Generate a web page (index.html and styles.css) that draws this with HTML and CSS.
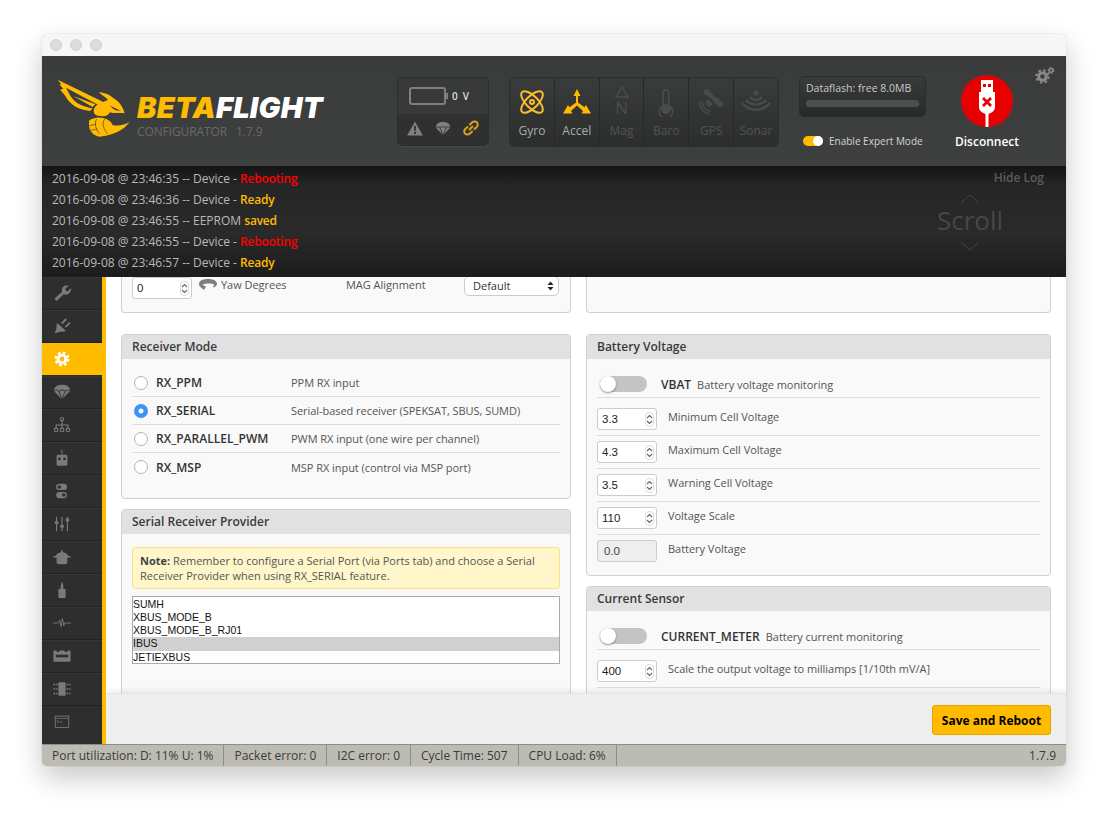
FILE: index.html
```html
<!DOCTYPE html>
<html lang="en">
<head>
<meta charset="utf-8">
<title>Betaflight Configurator</title>
<link rel="stylesheet" href="styles.css">
</head>
<body>
<div class="window">
  <div class="titlebar"><i class="dot"></i><i class="dot"></i><i class="dot"></i></div>

  <header class="header">
    <div class="logo">
      <svg class="wasp" viewBox="50 145 225 180" width="75" height="60">
        <path class="y" d="M55 150 L192 217 L184 230 L80 174 L94 200 C108 222 132 232 160 236 L152 244 C116 240 92 226 76 196 L62 180 L72 178 L60 164 L66 164 Z"/>
        <path class="y" d="M102 199 L168 224 L160 232 Z"/>
        <path class="y" d="M178 187 C200 190 212 196 222 205 C240 215 252 234 256 251 C238 249 226 252 212 248 C206 262 190 260 175 258 C160 254 160 240 170 228 C180 220 195 216 206 210 C196 201 186 195 178 187Z"/>
        <path class="dk" d="M212 228 L244 243 C232 244 222 240 212 228Z"/>
        <path class="y" d="M150 272 C176 256 210 264 220 286 C236 290 256 286 271 278 C252 300 230 312 200 318 L180 321 C160 318 144 300 150 272Z"/>
        <path class="dkl" d="M172 268 C165 280 168 296 180 312 M196 268 C188 280 190 294 204 312 M150 288 L170 284 M154 302 L174 298"/>
      </svg>
      <div class="logo-text">
        <div class="brand"><span class="brand-a">BETA</span><span class="brand-b">FLIGHT</span></div>
        <div class="sub"><span>CONFIGURATOR</span><span>1.7.9</span></div>
      </div>
    </div>

    <div class="battery-box">
      <div class="bat-top">
        <svg width="40" height="18" viewBox="0 0 40 18"><rect class="bat-o" x="1" y="1" width="35" height="16" rx="2"/><rect class="g" x="37" y="6" width="2" height="6"/></svg>
        <span class="volts">0 V</span>
      </div>
      <div class="bat-bottom">
        <svg width="16" height="15" viewBox="0 0 16 15"><path class="g" d="M8 0.5 L15.8 14.5 H0.2 Z"/><path class="dkf" d="M7 5 H9 L8.7 10 H7.3 Z M7 11 H9 V13 H7 Z"/></svg>
        <svg width="16" height="15" viewBox="0 0 20 18"><path class="g" d="M1 8 C1 3 5 1 10 1 C15 1 19 3 19 8 L10 17 Z"/><path class="dkl1" d="M1 8 C3 6.500 5 6.500 6 8 C7.500 6.500 12.500 6.500 14 8 C15 6.500 17 6.500 19 8 M6 8 L10 17 L14 8"/></svg>
        <svg width="16" height="16" viewBox="0 0 16 16"><path class="linkp" d="M6.500 9.500 L9.500 6.500 M7 4.500 L9 2.500 C10.500 1 12.800 1.200 14 2.500 C15 3.800 15 5.500 13.700 7 L11.500 9 M9 11.500 L7 13.500 C5.500 15 3.200 14.800 2 13.500 C1 12.200 1 10.500 2.300 9 L4.500 7"/></svg>
      </div>
    </div>

    <div class="sensors">
      <div class="sensor on">
        <svg width="26" height="26" viewBox="0 0 26 26"><g class="ys"><ellipse cx="13" cy="13" rx="14" ry="6" transform="rotate(45 13 13)"/><ellipse cx="13" cy="13" rx="14" ry="6" transform="rotate(-45 13 13)"/><circle cx="13" cy="13" r="2"/></g></svg>
        <span>Gyro</span>
      </div>
      <div class="sensor on">
        <svg width="28" height="26" viewBox="0 0 28 26"><path class="y" d="M14 0 L17.500 7 H15 V13.500 L21.500 18.300 L23 16 L28 24.500 H18.500 L20 22 L14 16.500 L8 22 L9.500 24.500 H0 L5 16 L6.500 18.300 L13 13.500 V7 H10.500 Z"/></svg>
        <span>Accel</span>
      </div>
      <div class="sensor">
        <div class="mag"><svg width="14" height="12" viewBox="0 0 14 12"><path class="ds" d="M7 1 L13 11 H1 Z"/></svg><b>N</b></div>
        <span>Mag</span>
      </div>
      <div class="sensor">
        <svg width="16" height="28" viewBox="0 0 16 28"><path class="df" d="M4.500 3 A3.500 3 0 0 1 11.500 3 V16 A7.500 7.500 0 1 1 4.500 16 Z M6 3.500 V17 A6 6 0 1 0 10 17 V3.500 A2 2 0 0 0 6 3.500 Z" fill-rule="evenodd"/><circle class="df" cx="8" cy="20" r="5"/></svg>
        <span>Baro</span>
      </div>
      <div class="sensor">
        <svg width="26" height="26" viewBox="0 0 26 26"><path class="df" d="M6 1 L10 0 L14 5 L17 8 L20 9 L26 15 L22 19 L16 13 L15 11 L11 8 L6 5 Z M10 10 L15 15 L11 18 L7 14 Z"/><path class="ds" d="M4 12 C4 17 7 21 12 22 M1 13 C2 20 6 24 12 25"/></svg>
        <span>GPS</span>
      </div>
      <div class="sensor">
        <svg width="30" height="24" viewBox="0 0 30 24"><circle class="df" cx="15" cy="4" r="2.500"/><path class="dsw" d="M9 8 C12 12 18 12 21 8 M5 11 C10 17 20 17 25 11 M1 14 C8 23 22 23 29 14"/></svg>
        <span>Sonar</span>
      </div>
    </div>

    <div class="flash-col">
      <div class="flash">
        <span>Dataflash: free 8.0MB</span>
        <div class="flash-bar"></div>
      </div>
      <div class="expert"><i class="mini-toggle"></i><span>Enable Expert Mode</span></div>
    </div>

    <div class="connect">
      <div class="usb">
        <svg width="24" height="50" viewBox="0 0 24 50"><path class="w" d="M6 3 H18 V15 H20 V30 C20 34 16 36 13.500 37 V50 H10.500 V37 C8 36 4 34 4 30 V15 H6 Z"/><rect class="r" x="8" y="7" width="3" height="3"/><rect class="r" x="13" y="7" width="3" height="3"/><path class="xm" d="M8 21 L16 29 M16 21 L8 29"/></svg>
      </div>
      <span>Disconnect</span>
    </div>

    <svg class="gears" width="20" height="17" viewBox="0 0 20 17">
      <circle class="gear-t" cx="7.500" cy="9.500" r="6.200" stroke-dasharray="2.400 2.470"/>
      <circle class="gear-r" cx="7.500" cy="9.500" r="3.800"/>
      <circle class="gear-t2" cx="16" cy="3.500" r="2.800" stroke-dasharray="1.500 1.430"/>
      <circle class="gear-r2" cx="16" cy="3.500" r="1.800"/>
    </svg>
  </header>

  <section class="log">
    <div class="log-lines">
      <div>2016-09-08 @ 23:46:35 -- Device - <em class="red">Rebooting</em></div>
      <div>2016-09-08 @ 23:46:36 -- Device - <em class="amb">Ready</em></div>
      <div>2016-09-08 @ 23:46:55 -- EEPROM <em class="amb">saved</em></div>
      <div>2016-09-08 @ 23:46:55 -- Device - <em class="red">Rebooting</em></div>
      <div>2016-09-08 @ 23:46:57 -- Device - <em class="amb">Ready</em></div>
    </div>
    <div class="scroll">
      <svg width="20" height="10" viewBox="0 0 20 10"><path class="chev" d="M1 9 L10 1 L19 9"/></svg>
      <span>Scroll</span>
      <svg width="20" height="10" viewBox="0 0 20 10"><path class="chev" d="M1 1 L10 9 L19 1"/></svg>
    </div>
    <a class="hide-log">Hide Log</a>
  </section>

  <div class="main">
    <nav class="side">
      <div class="tab first"><svg viewBox="0 0 20 20"><path class="n" d="M4 19 L1.500 16.500 L10 8.500 C9 4 12.500 0.500 17.500 2 L13.500 5.500 L14.500 7.500 L16.500 8 L20 4.500 C20.500 10 16 13 12 11.500 Z"/></svg></div>
      <div class="tab"><svg viewBox="0 0 20 20"><path class="n" d="M2 18 L4 12 C3.500 10 4 8 5 7 L14 15 C13 16.500 11 16.800 9 16 Z M9 6.500 L14 1.500 L15.500 3 L10.500 8 Z M13 10.500 L18 5.500 L19.500 7 L14.500 12 Z"/></svg></div>
      <div class="tab active"><svg viewBox="0 0 20 20"><circle class="gw" cx="10" cy="10" r="6.800" stroke-dasharray="2.850 2.490"/><circle class="gr" cx="10" cy="10" r="4.300"/></svg></div>
      <div class="tab"><svg viewBox="0 0 20 20"><path class="n" d="M1 9 C1 4 5 2 10 2 C15 2 19 4 19 9 L10 18 Z"/><path class="nd" d="M1 9 C3 7.500 5 7.500 6.500 9 C8 7.500 12 7.500 13.500 9 C15 7.500 17 7.500 19 9 M6.500 9 L10 18 L13.500 9"/></svg></div>
      <div class="tab"><svg viewBox="0 0 20 20"><path class="ns" d="M10 5 V10 M3.500 14 V10 H16.500 V14 M10 10 V14"/><circle class="nc" cx="10" cy="3.500" r="1.800"/><circle class="nc" cx="3.500" cy="15.500" r="2"/><circle class="nc" cx="10" cy="15.500" r="2"/><circle class="nc" cx="16.500" cy="15.500" r="2"/></svg></div>
      <div class="tab"><svg viewBox="0 0 20 20"><rect class="n" x="4" y="6.500" width="12" height="12" rx="1.500"/><rect class="n" x="9.500" y="0.500" width="1" height="6"/><circle class="dkc" cx="7.200" cy="11" r="1.600"/><circle class="dkc" cx="12.800" cy="11" r="1.600"/></svg></div>
      <div class="tab"><svg viewBox="0 0 20 20"><rect class="n" x="3.500" y="2" width="12" height="7" rx="3.500"/><rect class="n" x="3.500" y="11" width="12" height="7" rx="3.500"/><circle class="dkc" cx="7" cy="5.500" r="2"/><circle class="dkc" cx="12" cy="14.500" r="2"/></svg></div>
      <div class="tab"><svg viewBox="0 0 20 20"><path class="ns" d="M4 2 V18 M10 2 V18 M16 2 V18"/><rect class="n" x="2" y="7" width="4" height="3"/><rect class="n" x="8" y="11" width="4" height="3"/><rect class="n" x="14" y="4" width="4" height="3"/></svg></div>
      <div class="tab"><svg viewBox="0 0 20 20"><path class="n" d="M9 2.500 H11 V4.600 C14 4.900 16.500 6.400 17 9 H19.500 V10.500 H16 V15.500 C16 17 15 18 13.500 18 H6.500 C5 18 4 17 4 15.500 V10.500 H0.500 V9 H3 C3.500 6.400 6 4.900 9 4.600 Z"/></svg></div>
      <div class="tab"><svg viewBox="0 0 20 20"><path class="n" d="M9.500 1.500 H10.500 L11.500 6 V9 H14 V18 C14 19 13 19 13 19 H7 C7 19 6 19 6 18 V9 H8.500 V6 Z"/></svg></div>
      <div class="tab"><svg viewBox="0 0 20 20"><path class="nt" d="M0 10 H6 L7.500 7 L9 14 L10.500 5 L12 13 L13 10 H20"/></svg></div>
      <div class="tab"><svg viewBox="0 0 20 20"><path class="n" d="M2 4 H4 V5.500 H7 V4 H13 V5.500 H16 V4 H18 C19 4 19.500 4.500 19.500 5.500 V15 C19.500 16 19 16.500 18 16.500 H2 C1 16.500 0.500 16 0.500 15 V5.500 C0.500 4.500 1 4 2 4 Z"/><rect class="dkc" x="3" y="8.500" width="14" height="3"/></svg></div>
      <div class="tab"><svg viewBox="0 0 20 20"><rect class="n" x="6" y="2.500" width="8" height="15" rx="1"/><path class="nt2" d="M0.500 5 H5 M0.500 10 H5 M0.500 15 H5 M15 5 H19.500 M15 10 H19.500 M15 15 H19.500"/></svg></div>
      <div class="tab last"><svg viewBox="0 0 20 20"><rect class="to" x="2.500" y="3.500" width="15" height="12.500"/><path class="to2" d="M3 6 H17"/><path class="to" d="M4.500 8 L6.500 9.500 L4.500 11 M7.500 10 H10.500"/></svg></div>
    </nav>
    <div class="accent"></div>

    <div class="pane">
      <div class="columns">
        <div class="col">
          <div class="panel stub align">
            <div class="num"><span>0</span><i class="spin"><svg width="7" height="13" viewBox="0 0 7 13"><path class="sp" d="M1 5 L3.500 2.500 L6 5 M1 8 L3.500 10.500 L6 8"/></svg></i></div>
            <svg class="yaw" width="20" height="14" viewBox="0 0 20 14"><path class="yawp" d="M1 6 C1 2 6 1 10 1 C14 1 19 2 19 6 C19 8 17 9 15 9.500 L16 6.500 C14 5 6 5 4.500 7 L8 8.500 L6 12 L3 9.500 C2 8.500 1 8 1 6 Z"/></svg>
            <span class="lbl yawlbl">Yaw Degrees</span>
            <span class="lbl maglbl">MAG Alignment</span>
            <div class="select"><span>Default</span><svg width="7" height="10" viewBox="0 0 7 10"><path class="selp" d="M3.500 0.500 L6.500 4 H0.500 Z M3.500 9.500 L0.500 6 H6.500 Z"/></svg></div>
          </div>

          <div class="panel rx">
            <h2>Receiver Mode</h2>
            <div class="rx-body">
              <div class="rx-row"><i class="radio"></i><b>RX_PPM</b><span>PPM RX input</span></div>
              <div class="rx-row"><i class="radio sel"></i><b>RX_SERIAL</b><span>Serial-based receiver (SPEKSAT, SBUS, SUMD)</span></div>
              <div class="rx-row"><i class="radio"></i><b>RX_PARALLEL_PWM</b><span>PWM RX input (one wire per channel)</span></div>
              <div class="rx-row"><i class="radio"></i><b>RX_MSP</b><span>MSP RX input (control via MSP port)</span></div>
            </div>
          </div>

          <div class="panel provider">
            <h2>Serial Receiver Provider</h2>
            <div class="prov-body">
              <div class="note"><strong>Note:</strong> Remember to configure a Serial Port (via Ports tab) and choose a Serial Receiver Provider when using RX_SERIAL feature.</div>
              <div class="list">
                <div>SUMH</div>
                <div>XBUS_MODE_B</div>
                <div>XBUS_MODE_B_RJ01</div>
                <div class="picked">IBUS</div>
                <div>JETIEXBUS</div>
              </div>
            </div>
          </div>
        </div>

        <div class="col right">
          <div class="panel stub"></div>

          <div class="panel battery">
            <h2>Battery Voltage</h2>
            <div class="volt-body">
              <div class="tog-row"><i class="toggle"></i><b>VBAT</b><span>Battery voltage monitoring</span></div>
              <div class="v-row first-v"><div class="num"><span>3.3</span><i class="spin"><svg width="7" height="13" viewBox="0 0 7 13"><path class="sp" d="M1 5 L3.500 2.500 L6 5 M1 8 L3.500 10.500 L6 8"/></svg></i></div><span class="lbl">Minimum Cell Voltage</span></div>
              <div class="v-row"><div class="num"><span>4.3</span><i class="spin"><svg width="7" height="13" viewBox="0 0 7 13"><path class="sp" d="M1 5 L3.500 2.500 L6 5 M1 8 L3.500 10.500 L6 8"/></svg></i></div><span class="lbl">Maximum Cell Voltage</span></div>
              <div class="v-row"><div class="num"><span>3.5</span><i class="spin"><svg width="7" height="13" viewBox="0 0 7 13"><path class="sp" d="M1 5 L3.500 2.500 L6 5 M1 8 L3.500 10.500 L6 8"/></svg></i></div><span class="lbl">Warning Cell Voltage</span></div>
              <div class="v-row"><div class="num"><span>110</span><i class="spin"><svg width="7" height="13" viewBox="0 0 7 13"><path class="sp" d="M1 5 L3.500 2.500 L6 5 M1 8 L3.500 10.500 L6 8"/></svg></i></div><span class="lbl">Voltage Scale</span></div>
              <div class="v-row end"><div class="num off"><span>0.0</span></div><span class="lbl">Battery Voltage</span></div>
            </div>
          </div>

          <div class="panel current">
            <h2>Current Sensor</h2>
            <div class="volt-body">
              <div class="tog-row"><i class="toggle"></i><b>CURRENT_METER</b><span>Battery current monitoring</span></div>
              <div class="v-row first-v"><div class="num"><span>400</span><i class="spin"><svg width="7" height="13" viewBox="0 0 7 13"><path class="sp" d="M1 5 L3.500 2.500 L6 5 M1 8 L3.500 10.500 L6 8"/></svg></i></div><span class="lbl">Scale the output voltage to milliamps [1/10th mV/A]</span></div>
              <div class="v-row end"><div class="num off"></div></div>
            </div>
          </div>
        </div>
      </div>

      <div class="toolbar"><button class="save">Save and Reboot</button></div>
    </div>
  </div>

  <footer class="status">
    <span>Port utilization: D: 11% U: 1%</span>
    <span>Packet error: 0</span>
    <span>I2C error: 0</span>
    <span>Cycle Time: 507</span>
    <span>CPU Load: 6%</span>
    <span class="ver">1.7.9</span>
  </footer>
</div>
</body>
</html>
```

FILE: styles.css
```css
* { box-sizing: border-box; }
html, body { margin: 0; height: 100%; background: #fff; overflow: hidden; }
body { font-family: "Open Sans", "Liberation Sans", sans-serif; font-size: 11px; color: #444; }
i { display: block; font-style: normal; }
em { font-style: normal; font-weight: 600; letter-spacing: -0.2px; }

.window { position: relative; width: 1024px; height: 732px; margin: 34px 0 0 42px; display: flex; flex-direction: column; border-radius: 5px; overflow: hidden; background: #fff; box-shadow: 0 0 1px rgba(0,0,0,.35), 0 12px 28px rgba(0,0,0,.22); }
.titlebar { height: 22px; flex: none; background: #f6f6f6; display: flex; align-items: center; gap: 8px; padding-left: 8px; }
.dot { width: 12px; height: 12px; border-radius: 50%; background: #dcdcdc; border: 1px solid #d2d2d2; }

/* header */
.header { position: relative; height: 110px; flex: none; display: flex; background: linear-gradient(#3a3c3c, #3e4040); }
.logo { width: 355px; flex: none; display: flex; gap: 5px; padding: 22px 0 0 14px; }
.wasp { flex: none; }
.y { fill: #ffbb00; }
.dk { fill: #3a3c3c; }
.dkl { fill: none; stroke: #3a3c3c; stroke-width: 2; }
.dkl1 { fill: none; stroke: #2f3131; stroke-width: 1; }
.logo-text { padding-top: 18px; margin-left: 1px; }
.brand { font-family: Inter, "Liberation Sans", sans-serif; font-weight: 900; font-style: italic; font-size: 29px; line-height: 24px; letter-spacing: 0.3px; white-space: nowrap; }
.brand-a { color: #ffbb00; }
.brand-b { color: #fff; }
.sub { display: flex; gap: 9px; color: #686a6a; font-size: 12px; line-height: 16px; margin-top: 4px; letter-spacing: -0.1px; }

.battery-box { width: 92px; height: 69px; margin-top: 21px; flex: none; border-radius: 5px; background: #323434; border: 1px solid #2c2e2e; overflow: hidden; box-shadow: 0 1px 0 rgba(255,255,255,.05); }
.bat-top { height: 36px; display: flex; align-items: center; padding-left: 11px; gap: 3px; background: #383a3a; }
.bat-o { fill: none; stroke: #808080; stroke-width: 2; }
.g { fill: #808080; }
.dkf { fill: #2f3131; }
.volts { font-size: 10px; font-weight: 600; color: #ddd; letter-spacing: 1.2px; }
.bat-bottom { height: 32px; display: flex; align-items: center; gap: 12px; padding: 0 0 4px 9px; background: #2f3131; }
.linkp { fill: none; stroke: #d9a11a; stroke-width: 2; stroke-linecap: round; }

.sensors { width: 270px; height: 70px; margin: 21px 0 0 20px; flex: none; display: flex; border-radius: 6px; border: 1px solid #2c2e2e; overflow: hidden; background: linear-gradient(#3a3c3c, #2c2e2e); }
.sensor { flex: 1; display: flex; flex-direction: column; align-items: center; border-right: 1px solid #272929; padding-top: 11px; position: relative; color: #515353; font-size: 12px; }
.sensor:last-child { border-right: 0; }
.sensor > span { position: absolute; top: 44px; left: 0; right: 0; text-align: center; }
.sensor.on { color: #a9abab; }
.ys { fill: none; stroke: #fbbc2c; stroke-width: 2; }
.ds { fill: none; stroke: #4a4c4c; stroke-width: 1.5; }
.dsw { fill: none; stroke: #4a4c4c; stroke-width: 2.200; }
.df { fill: #4a4c4c; }
.mag { display: flex; flex-direction: column; align-items: center; margin-top: -3px; }
.mag b { font-family: "Open Sans", sans-serif; font-weight: 400; font-size: 17px; line-height: 17px; color: #4a4c4c; margin-top: 1px; }

.flash-col { width: 127px; margin-left: 20px; flex: none; padding-top: 20px; }
.flash { height: 41px; border-radius: 5px; border: 1px solid #2a2c2c; background: linear-gradient(#3a3c3c, #282a2a); padding: 3px 6px; color: #c9c9c9; font-size: 10.500px; line-height: 17px; }
.flash-bar { height: 7px; border-radius: 3px; margin-top: 3px; background: #4d4f4f; }
.expert { display: flex; align-items: center; gap: 6px; margin: 17px 0 0 4px; color: #d5d5d5; font-size: 10px; white-space: nowrap; }
.mini-toggle { position: relative; width: 20px; height: 10px; border-radius: 5px; background: #ffbb00; flex: none; }
.mini-toggle::after { content: ""; position: absolute; right: 0; top: 0; width: 10px; height: 10px; border-radius: 50%; background: #fff; }

.connect { width: 62px; margin-left: 30px; flex: none; display: flex; flex-direction: column; align-items: center; padding-top: 19px; color: #fff; font-size: 12px; font-weight: 600; }
.usb { width: 52px; height: 52px; border-radius: 50%; background: #e60000; display: flex; justify-content: center; overflow: hidden; padding-top: 2px; flex: none; }
.w { fill: #fff; }
.r { fill: #e60000; }
.xm { fill: none; stroke: #e60000; stroke-width: 2.800; }
.connect > span { margin-top: 7px; white-space: nowrap; line-height: 16px; }
.gears { position: absolute; right: 11px; top: 11px; }
.gear-t, .gear-t2, .gear-r, .gear-r2 { fill: none; stroke: #8a8a8a; }
.gear-t { stroke-width: 2; }
.gear-r { stroke-width: 3; }
.gear-t2 { stroke-width: 1.200; }
.gear-r2 { stroke-width: 1.400; }

/* log */
.log { position: relative; height: 111px; flex: none; background: linear-gradient(#141414, #262626 18%, #2a2a2a 60%, #1c1c1c); padding: 2px 0 0 10px; color: #b9b9b9; font-size: 12px; line-height: 21px; }
.red { color: #f00; }
.amb { color: #ffbb00; }
.scroll { position: absolute; left: 874px; top: 22px; width: 108px; height: 90px; display: flex; flex-direction: column; align-items: center; color: #474747; font-size: 26px; line-height: 28px; padding-top: 6px; gap: 2px; }
.scroll svg:last-child { margin-top: 5px; }
.chev { fill: none; stroke: #474747; stroke-width: 1; }
.hide-log { position: absolute; right: 22px; top: 1px; color: #5c5c5c; font-weight: 600; font-size: 12px; }

/* main */
.main { flex: 1; min-height: 0; display: flex; }
.side { width: 60px; flex: none; display: flex; flex-direction: column; background: #2e2e2e; }
.tab { height: 33px; flex: none; display: flex; align-items: center; padding-left: 11px; border-bottom: 1px solid #222; box-shadow: inset 0 1px 0 #363636; }
.tab svg { width: 18px; height: 18px; }
.tab.last { flex: 1; border-bottom: 0; padding-bottom: 6px; box-shadow: none; }
.tab.active { background: #ffbb00; border-bottom-color: #2e2e2e; box-shadow: none; }
.n { fill: #7a7a7a; }
.nd { fill: none; stroke: #2e2e2e; stroke-width: 1; }
.ns { fill: none; stroke: #7a7a7a; stroke-width: 1.300; }
.nc { fill: none; stroke: #7a7a7a; stroke-width: 1.300; }
.nt { fill: none; stroke: #7a7a7a; stroke-width: 1; }
.nt2 { fill: none; stroke: #7a7a7a; stroke-width: 1.400; stroke-dasharray: 2 1; }
.dkc { fill: #2e2e2e; }
.to { fill: none; stroke: #787878; stroke-width: 1; }
.to2 { fill: none; stroke: #666; stroke-width: 1; }
.gw { fill: none; stroke: #fff; stroke-width: 3; }
.gr { fill: none; stroke: #fff; stroke-width: 3.200; }
.accent { width: 4px; flex: none; background: #ffbb00; }

.pane { position: relative; flex: 1; min-width: 0; display: flex; flex-direction: column; overflow: hidden; background: #fff; }
.columns { flex: 1; min-height: 0; overflow: hidden; display: flex; gap: 15px; padding: 0 15px 0 15px; }
.col { width: 450px; flex: none; }
.col.right { width: 465px; }

.panel { border: 1px solid #d0d0d0; border-radius: 4px; background: #f9f9f9; margin-bottom: 10px; overflow: hidden; }
.panel h2 { margin: 0; height: 24px; background: #e1e1e1; font-size: 12px; line-height: 24px; font-weight: 600; color: #3a3a3a; padding-left: 10px; }
.stub { height: 36px; border-top: 0; border-radius: 0 0 4px 4px; margin-bottom: 21px; }
.align { display: flex; align-items: flex-start; padding-left: 10px; position: relative; }

.num { position: relative; width: 60px; height: 22px; flex: none; border: 1px solid #ccc; border-radius: 3px; background: #fff; font-family: "Liberation Sans", sans-serif; font-size: 11.500px; line-height: 21px; color: #222; padding-left: 4px; }
.spin { position: absolute; right: 2px; top: 3px; width: 9px; height: 15px; border: 1px solid #ddd; border-radius: 4px; display: flex; align-items: center; justify-content: center; }
.sp { fill: none; stroke: #666; stroke-width: 1.100; }
.num.off { background: #eee; padding-left: 6px; color: #444; border-color: #ccc; }

.lbl { color: #555; font-size: 11px; letter-spacing: -0.03px; }
.yaw { margin: 1px 0 0 6px; flex: none; }
.yawp { fill: #7d7d7d; }
.yawlbl { margin-left: 3px; line-height: 16px; width: 125px; flex: none; }
.maglbl { line-height: 16px; width: 118px; flex: none; }
.select { width: 95px; height: 20px; flex: none; border: 1px solid #ccc; border-radius: 5px; background: #fff; margin-top: -1px; display: flex; align-items: center; justify-content: space-between; padding: 0 4px 1px 8px; font-family: "Open Sans", sans-serif; font-size: 11px; color: #333; }
.selp { fill: #222; }

.rx { height: 165px; }
.rx-body { padding: 10px 10px 0; }
.rx-row { display: flex; align-items: center; height: 28px; border-bottom: 1px solid #ddd; padding-left: 2px; }
.rx-row:last-child { border-bottom: 0; }
.rx-row b { width: 135px; margin-left: 8px; font-weight: 600; color: #333; font-size: 12px; }
.rx-row span { color: #555; font-size: 11px; letter-spacing: -0.05px; }
.radio { width: 14px; height: 14px; flex: none; border-radius: 50%; background: #fff; border: 1px solid #b5b5b5; }
.radio.sel { border: 0; background: radial-gradient(circle, #fff 0 2.200px, #3d94f6 2.800px); }

.provider { height: 300px; }
.prov-body { padding: 13px 10px 0; }
.note { height: 42px; border: 1px solid #ffe083; border-radius: 3px; background: #fff6ca; padding: 5px 7px; font-size: 11px; line-height: 15px; color: #555; }
.note strong { font-weight: 700; color: #444; }
.list { margin-top: 7px; height: 68px; border: 1px solid #aaa; background: #fff; font-family: "Liberation Sans", sans-serif; font-size: 10.500px; line-height: 13px; color: #111; padding-top: 1px; }
.list > div { height: 13px; }
.list .picked { background: #d0d0d0; height: 14px; line-height: 13px; }

.battery { height: 242px; }
.volt-body { padding: 0 10px; }
.tog-row { display: flex; align-items: center; height: 39px; padding-top: 13px; border-bottom: 1px solid #ddd; }
.tog-row b { font-weight: 600; font-size: 12px; color: #333; margin-left: 14px; }
.tog-row span { font-size: 11px; color: #555; margin-left: 6px; letter-spacing: -0.03px; }
.toggle { position: relative; width: 47px; height: 16px; margin-left: 3px; margin-top: -1px; border-radius: 8px; background: #c4c4c4; flex: none; }
.tog-row b, .tog-row span { margin-top: -1px; }
.toggle::after { content: ""; position: absolute; left: 0; top: 0; width: 16px; height: 16px; border-radius: 50%; background: #fff; box-shadow: 0 1px 2px rgba(0,0,0,.4); }
.v-row { display: flex; align-items: flex-start; height: 33px; padding-top: 5px; border-bottom: 1px solid #ddd; }
.v-row.first-v { height: 38px; padding-top: 10px; }
.v-row.end { border-bottom: 0; }
.v-row .lbl { margin-left: 11px; line-height: 18px; }
.current { height: 300px; }

.toolbar { flex: none; height: 51px; background: #eee; border-top: 1px solid #e3e3e3; box-shadow: 0 -2px 6px rgba(0,0,0,.08); display: flex; justify-content: flex-end; align-items: flex-start; padding: 11px 15px 0 0; position: relative; }
.save { width: 119px; height: 30px; border: 1px solid #e2a800; border-radius: 3px; background: #ffbb00; font-family: "Open Sans", sans-serif; font-weight: 700; font-size: 12px; color: #000; padding: 0; }

.status { height: 22px; flex: none; display: flex; background: #bdbcb3; border-top: 1px solid #8f8e88; font-size: 12px; line-height: 21px; color: #3a3a3a; }
.status span { padding: 0 10px; border-right: 1px solid #8f8e88; white-space: nowrap; }
.status .ver { margin-left: auto; border-right: 0; }
```
